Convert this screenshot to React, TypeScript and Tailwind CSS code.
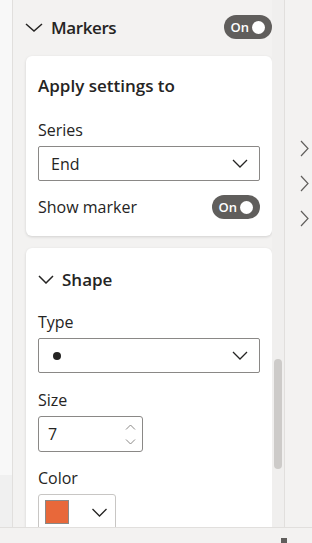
import React from 'react';

const font = { fontFamily: '"Open Sans", "Noto Sans", sans-serif' };

function Chevron({ className = '' }: { className?: string }) {
  return (
    <svg className={className} viewBox="0 0 16 9" fill="none">
      <polyline points="1,1 8,8 15,1" stroke="#252423" strokeWidth="1.3" />
    </svg>
  );
}

function Toggle() {
  return (
    <div className="flex h-[24px] w-[48px] items-center justify-end gap-[3px] rounded-full bg-[#605e5c] pr-[7px]">
      <span className="text-[13px] font-semibold leading-none text-white">On</span>
      <span className="h-[13px] w-[13px] rounded-full bg-white" />
    </div>
  );
}

function Select({ children }: { children: React.ReactNode }) {
  return (
    <div className="flex h-[35px] w-[222px] items-center justify-between rounded-[2px] border border-[#8a8886] bg-white pl-[12px] pr-[11px]">
      <div className="flex items-center">{children}</div>
      <Chevron className="h-[9px] w-[16px]" />
    </div>
  );
}

export default function App() {
  return (
    <div className="flex h-[543px] w-[312px] flex-col overflow-hidden bg-[#f3f2f1] text-[#252423]" style={font}>
      <div className="flex h-[527px] overflow-hidden">
        {/* left strip */}
        <div className="flex w-[13px] flex-col border-r border-[#e1dfdd]">
          <div className="h-[475px] bg-[#f8f8f8]" />
          <div className="flex-1 bg-[#f0f0f0]" />
        </div>

        {/* main panel */}
        <div className="flex w-[272px] border-r border-[#e1dfdd]">
          <div className="w-[259px] pl-[13px]">
            <div className="flex h-[56px] items-center justify-between pb-[2px]">
              <div className="flex items-center">
                <svg className="ml-[-1px] h-[9px] w-[18px]" viewBox="0 0 18 9" fill="none">
                  <polyline points="1,1 9,8 17,1" stroke="#252423" strokeWidth="1.5" />
                </svg>
                <span className="ml-[8px] text-[17px] font-semibold leading-none tracking-[-0.4px]">Markers</span>
              </div>
              <Toggle />
            </div>

            {/* card 1 */}
            <div className="flex h-[180px] w-[246px] flex-col rounded-[6px] bg-white px-[12px] pt-[16px] shadow-[0_1px_3px_rgba(0,0,0,0.14)]">
              <div className="flex h-[28px] items-center text-[17px] font-semibold">Apply settings to</div>
              <div className="mt-[15px] flex h-[26px] items-center pt-[3px] text-[16px]">Series</div>
              <div className="mt-[5px]">
                <Select>
                  <span className="text-[16px]">End</span>
                </Select>
              </div>
              <div className="mt-[14px] flex h-[24px] items-center justify-between">
                <span className="text-[16px]">Show marker</span>
                <Toggle />
              </div>
            </div>

            {/* card 2 */}
            <div className="mt-[12px] flex h-[320px] w-[246px] flex-col rounded-[6px] bg-white px-[12px] pt-[19px] shadow-[0_1px_3px_rgba(0,0,0,0.14)]">
              <div className="flex h-[24px] items-center">
                <svg className="h-[9px] w-[16px]" viewBox="0 0 16 9" fill="none">
                  <polyline points="1,1 8,8 15,1" stroke="#252423" strokeWidth="1.5" />
                </svg>
                <span className="ml-[8px] text-[17px] font-semibold leading-none">Shape</span>
              </div>
              <div className="mt-[17px] flex h-[26px] items-center pt-[2px] text-[16px]">Type</div>
              <div className="mt-[4px]">
                <Select>
                  <span className="ml-[2px] h-[8px] w-[8px] rounded-full bg-[#252423]" />
                </Select>
              </div>
              <div className="mt-[13px] flex h-[26px] items-center pt-[2px] text-[16px]">Size</div>
              <div className="mt-[4px] flex h-[36px] w-[105px] items-center justify-between rounded-[3px] border border-[#8a8886] pl-[9px] pr-[6px]">
                <span className="text-[16px]">7</span>
                <div className="flex flex-col gap-[9px]">
                  <svg className="h-[6px] w-[11px]" viewBox="0 0 11 6" fill="none">
                    <polyline points="1,5.5 5.5,1 10,5.5" stroke="#8a8886" strokeWidth="1" />
                  </svg>
                  <svg className="h-[6px] w-[11px]" viewBox="0 0 11 6" fill="none">
                    <polyline points="1,0.5 5.5,5 10,0.5" stroke="#8a8886" strokeWidth="1" />
                  </svg>
                </div>
              </div>
              <div className="mt-[12px] flex h-[26px] items-center pt-[2px] text-[16px]">Color</div>
              <div className="mt-[4px] flex h-[36px] w-[78px] items-center justify-between rounded-[3px] border border-[#c8c6c4] pl-[6px] pr-[7px]">
                <span className="h-[24px] w-[24px] border border-[#8a8886] bg-[#e8683a]" />
                <Chevron className="h-[9px] w-[17px]" />
              </div>
            </div>
          </div>

          {/* scrollbar track */}
          <div className="flex w-[12px] flex-col bg-[#f0efee] pl-[2px]">
            <div className="mt-[359px] h-[110px] w-[8px] rounded-full bg-[#cdcbc9]" />
          </div>
        </div>

        {/* right panel */}
        <div className="flex flex-1 flex-col items-start pl-[15px] pt-[140px]">
          {[0, 1, 2].map((i) => (
            <svg key={i} className="mb-[18px] h-[17px] w-[9px]" viewBox="0 0 9 17" fill="none">
              <polyline points="1,1 8,8.5 1,16" stroke="#605e5c" strokeWidth="1.2" />
            </svg>
          ))}
        </div>
      </div>

      {/* bottom bar */}
      <div className="relative h-[16px] border-t border-[#e1dfdd] bg-[#f3f2f1]">
        <div className="absolute left-[281px] top-[10px] h-[6px] w-[6px] bg-[#605e5c]" />
      </div>
    </div>
  );
}
